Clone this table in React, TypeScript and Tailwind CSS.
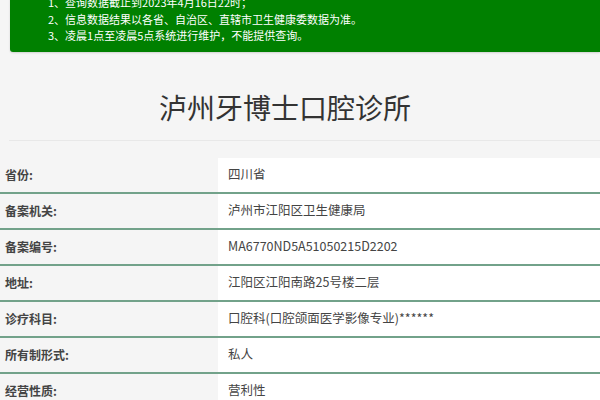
import React from 'react';

const notices = [
  '1、查询数据截止到2023年4月16日22时；',
  '2、信息数据结果以各省、自治区、直辖市卫生健康委数据为准。',
  '3、凌晨1点至凌晨5点系统进行维护，不能提供查询。',
];

const rows = [
  { label: '省份:', value: '四川省' },
  { label: '备案机关:', value: '泸州市江阳区卫生健康局' },
  { label: '备案编号:', value: 'MA6770ND5A51050215D2202' },
  { label: '地址:', value: '江阳区江阳南路25号楼二层' },
  { label: '诊疗科目:', value: '口腔科(口腔颌面医学影像专业)******' },
  { label: '所有制形式:', value: '私人' },
  { label: '经营性质:', value: '营利性' },
];

const App: React.FC = () => {
  return (
    <div
      className="w-[600px] h-[400px] overflow-hidden bg-[#f5f5f5] text-[#333]"
      style={{ fontFamily: '"Noto Sans CJK SC", "Noto Sans", sans-serif' }}
    >
      {/* 提示 */}
      <div className="pl-[10px]">
        <div className="mt-[-15px] bg-[#008000] rounded-l-[3px] pt-[9px] pb-[8px] pl-[38px] shadow-[0_1px_2px_rgba(0,0,0,0.15)]">
          {notices.map((n, i) => (
            <div key={i} className="text-[11px] leading-[16.5px] text-white">
              {n}
            </div>
          ))}
        </div>
      </div>

      {/* 标题 */}
      <h1 className="mt-[35px] w-[570px] text-center text-[28px] leading-[40px] font-normal text-[#333]">
        泸州牙博士口腔诊所
      </h1>
      <div className="ml-[9px] mt-[13px] h-px bg-[#e8e8e8]" />

      {/* 详情 */}
      <div className="mt-[17px]">
        {rows.map((row, i) => (
          <div key={i} className="flex h-[36px] border-b-2 border-[#72a28a]">
            <div className="w-[218px] pl-[5px] flex items-center text-[12px] font-bold text-[#444]">
              {row.label}
            </div>
            <div className="flex-1 bg-white pl-[10px] flex items-center text-[12.5px] text-[#444]">
              {row.value}
            </div>
          </div>
        ))}
      </div>
    </div>
  );
};

export default App;
